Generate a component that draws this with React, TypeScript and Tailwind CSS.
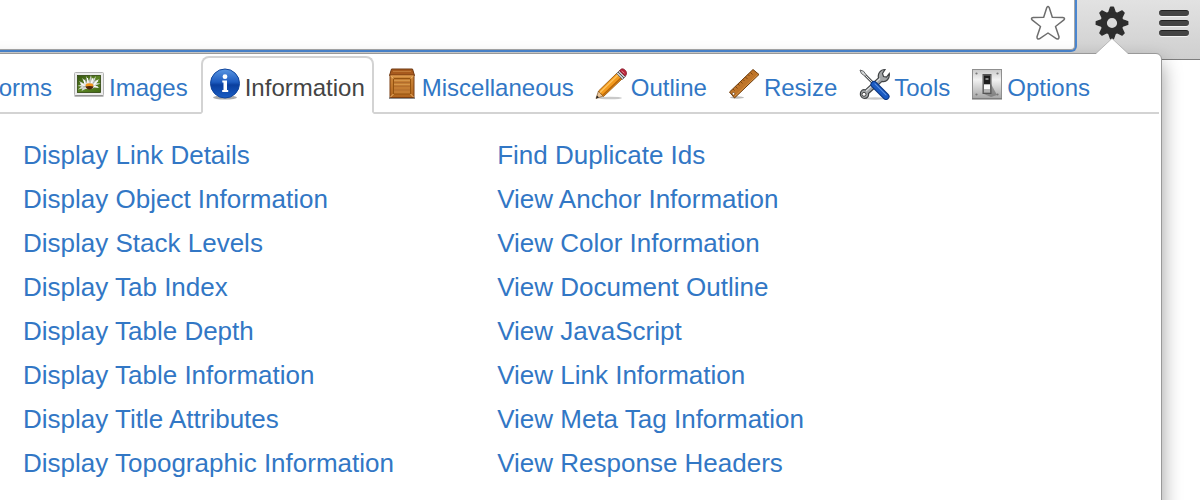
import React from 'react';

const FormsIcon = () => (
  <svg viewBox="0 0 32 32" className="w-8 h-8">
    <rect x="2" y="5" width="28" height="22" fill="#fff" stroke="#999" />
    <path d="M6 11h20M6 16h20M6 21h12" stroke="#3875c6" strokeWidth="2" />
  </svg>
);

const ImagesIcon = () => (
  <svg viewBox="0 0 32 32" className="w-8 h-8">
    <defs>
      <linearGradient id="grass" x1="0" y1="0" x2="1" y2="1">
        <stop offset="0" stopColor="#34530f" />
        <stop offset="0.5" stopColor="#5c8524" />
        <stop offset="1" stopColor="#416a14" />
      </linearGradient>
    </defs>
    <rect x="1.5" y="4.5" width="29" height="23" rx="1" fill="#ececec" stroke="#b4b4b4" />
    <path d="M1.5 28h29" stroke="#777" />
    <rect x="4.500" y="7.500" width="23" height="17" fill="url(#grass)" stroke="#2c420d" strokeWidth="0.800" />
    <path
      d="M6 13l6 3-3-6 5 4-1-6 3 5 2-6 1 6 4-5-1.500 5 5-2-4 4 5 .5-5 2 4 2.500-5-.5-3 1.500h-6l-4 2 1-2.500-4.500 1 3.500-3-4-.5 4-1.500z"
      fill="#d8dad6"
    />
    <path d="M12 16l-1-4M15 15l-.5-5M18.500 15l1.500-5M21 16.500l4-4M11.500 17.500l-4-2M21 18.500l4 .5" stroke="#fff" strokeWidth="1.100" />
    <path d="M13.500 15l-1.500-4M17 14.500v-4M20 15.500l2.500-4M10 19l3-.5" stroke="#8e958c" strokeWidth="0.700" />
    <ellipse cx="16.500" cy="17.500" rx="3.800" ry="2.200" fill="#f0941c" />
    <path d="M12.500 18.500c1 4 7 4 8 0-2-.8-6-.8-8 0z" fill="#4a260d" />
  </svg>
);

const InfoIcon = () => (
  <svg viewBox="0 0 32 32" className="w-8 h-8">
    <defs>
      <linearGradient id="infoBall" x1="0" y1="0" x2="0" y2="1">
        <stop offset="0" stopColor="#5a96e2" />
        <stop offset="0.450" stopColor="#1e5cc0" />
        <stop offset="0.550" stopColor="#0a3f9e" />
        <stop offset="1" stopColor="#1a5dc4" />
      </linearGradient>
    </defs>
    <ellipse cx="16" cy="29.500" rx="12" ry="2" fill="#555" opacity="0.500" />
    <circle cx="16" cy="15.500" r="14.500" fill="url(#infoBall)" stroke="#10459c" />
    <circle cx="16" cy="8.700" r="2.400" fill="#fff" />
    <path d="M13.300 12.500h4.700v9.500h1.200v2h-6v-2h1.300v-7.500h-1.200z" fill="#fff" />
  </svg>
);

const CrateIcon = () => (
  <svg viewBox="0 0 32 32" className="w-8 h-8">
    <defs>
      <linearGradient id="crate" x1="0" y1="0" x2="0" y2="1">
        <stop offset="0" stopColor="#d08a3c" />
        <stop offset="1" stopColor="#b0641c" />
      </linearGradient>
    </defs>
    <path d="M3 30h26" stroke="#444" strokeWidth="2" opacity="0.600" />
    <path d="M5.500 1h21l2 6.500h-25z" fill="#a85a1d" stroke="#6e3812" />
    <path d="M7 3.500h18" stroke="#c07a38" />
    <rect x="4" y="7" width="24" height="22.500" rx="0.500" fill="url(#crate)" stroke="#7a3e12" />
    <rect x="7.500" y="10.500" width="17" height="15.500" fill="#c47d33" stroke="#94530f" />
    <path d="M8 14.500h16M8 18.300h16M8 22h16" stroke="#a9662a" strokeWidth="0.700" />
    <path d="M8 12.500h16M8 16.500h16" stroke="#dda053" strokeWidth="0.700" />
    <path d="M4.500 8l3 2.500M27.500 8l-3 2.500M4.500 29l3-3M27.500 29l-3-3" stroke="#f0b870" />
    <path d="M5 8h22" stroke="#eaa95b" />
  </svg>
);

const PencilIcon = () => (
  <svg viewBox="0 0 32 32" className="w-8 h-8">
    <ellipse cx="15" cy="30" rx="12" ry="1.300" fill="#777" opacity="0.400" />
    <path d="M1 30.500L3.500 23l5 5z" fill="#ecc79a" stroke="#7d5326" strokeWidth="0.700" />
    <path d="M1 30.500l1-3 2 2z" fill="#222" />
    <path d="M3.500 23L22 5l5.500 5.500-19 18z" fill="#f39a1d" stroke="#8f5109" strokeWidth="0.800" />
    <path d="M5 24.500L23.500 6.500" stroke="#ffc561" strokeWidth="1.300" />
    <path d="M7.800 27.300L26.500 9.500" stroke="#b86508" strokeWidth="1.500" />
    <path d="M21.500 5.500L24.500 2.500l6 6-3 3z" fill="#c8cbd0" stroke="#555" strokeWidth="0.700" />
    <path d="M23 4l6 6" stroke="#555" />
    <path d="M24.500 2.800c2-2.800 4-2.300 5.700-.6 1.800 1.800 2 4 0 6z" fill="#b8263c" stroke="#77101f" strokeWidth="0.700" />
    <path d="M26.500 2.800l3 2.500" stroke="#e37c88" />
  </svg>
);

const RulerIcon = () => (
  <svg viewBox="0 0 32 32" className="w-8 h-8">
    <ellipse cx="9" cy="29.500" rx="7" ry="1.200" fill="#555" opacity="0.400" />
    <path d="M1.500 24L25 1.500l6 5L6.500 30z" fill="#bf7529" stroke="#6f3d0c" />
    <path d="M6.500 28.500L29.500 6.800" stroke="#d79243" />
    <path
      d="M5 21l1.500 1.500M7.500 18.500l2 2M10 16l1.500 1.500M12.500 13.500l2 2M15 11.500l1.500 1.500M17.500 9l2 2M20 6.500l1.500 1.500M22.500 4.500l2 2"
      stroke="#6b390b"
      strokeWidth="0.800"
    />
    <circle cx="5.500" cy="25.800" r="1.300" fill="#fff" stroke="#5d330b" strokeWidth="0.600" />
  </svg>
);

const ToolsIcon = () => (
  <svg viewBox="0 0 32 32" className="w-8 h-8">
    <ellipse cx="17" cy="30.500" rx="13" ry="1.200" fill="#777" opacity="0.400" />
    <path
      d="M3 23.500c1-1.500 3-2 4.500-1.500L20.500 10c-1-4 1.500-8.500 6.500-8.500l-2.500 4 1 3 3 .5 2.800-3.500c.7 5-3 9-7.300 7.800L10.500 25.500c.5 3-1.500 5-4 5-3.500 0-5-4-3.500-7z"
      fill="#a3a6a8"
      stroke="#3f4244"
      strokeWidth="1.200"
    />
    <path d="M8 23L22 10.500" stroke="#dcdedf" strokeWidth="1.300" />
    <circle cx="6" cy="26.300" r="2" fill="#fff" stroke="#444" />
    <path d="M2 2l3.500 1.200 3 4-1.200 1.200-4-3z" fill="#d6d8d9" stroke="#55585a" strokeWidth="0.900" />
    <path d="M7.500 7.500l8 8" stroke="#55585a" strokeWidth="2.800" />
    <path d="M7.500 7.500l8 8" stroke="#e1e2e3" />
    <path d="M16 16.500l12 12" stroke="#0a347f" strokeWidth="7" strokeLinecap="round" />
    <path d="M16 16.500l12 12" stroke="#1a5ac2" strokeWidth="5" strokeLinecap="round" />
    <path d="M17 15.800l11 11" stroke="#5a90e2" strokeWidth="1.100" strokeLinecap="round" />
  </svg>
);

const SwitchIcon = () => (
  <svg viewBox="0 0 32 32" className="w-8 h-8">
    <defs>
      <linearGradient id="plate" x1="0" y1="0" x2="0" y2="1">
        <stop offset="0" stopColor="#c9c9c9" />
        <stop offset="0.350" stopColor="#f2f2f2" />
        <stop offset="1" stopColor="#a5a5a5" />
      </linearGradient>
    </defs>
    <rect x="1.500" y="1.500" width="29" height="29" fill="url(#plate)" stroke="#8f8f8f" />
    <path d="M1 31h30" stroke="#6d6d6d" />
    <path d="M20 16l6 11-6 2-7-3z" fill="#666" opacity="0.600" />
    <rect x="12" y="6.500" width="8" height="19" fill="#777" stroke="#555" />
    <path d="M13 7.500h6v8.500h-6z" fill="#1c1c1c" />
    <path d="M14.500 10h3v2h-3z" fill="#888" />
    <path d="M13 16.500h6v5h-6z" fill="#fafafa" />
    <path d="M13 21.500h6v3h-6z" fill="#b5b5b5" />
    <g fill="#777">
      <circle cx="5.500" cy="5.500" r="1.100" />
      <circle cx="26.500" cy="5.500" r="1.100" />
      <circle cx="5.500" cy="26.500" r="1.100" />
      <circle cx="26.500" cy="26.500" r="1.100" />
    </g>
  </svg>
);

const StarIcon = () => (
  <svg viewBox="0 0 36 36" className="w-9 h-9">
    <path
      d="M16.800 2.600Q18 .6 19.200 2.600L22.300 12.300L32.800 12.600Q35.800 13 33.600 15.200L25.500 21.500L29 31.700Q29.200 34.500 26.600 33.800L18 28L9.400 33.800Q6.800 34.500 7 31.700L10.500 21.500L2.400 15.200Q.2 13 3.200 12.600L13.700 12.300Z"
      fill="#fff"
      stroke="#6e6e6e"
      strokeWidth="1.500"
      strokeLinejoin="round"
    />
  </svg>
);

const GearIcon = () => (
  <svg viewBox="-17 -17 34 34" className="w-[34px] h-[34px]">
    <circle r="8.300" fill="none" stroke="#2d2d2d" strokeWidth="6.400" />
    {[0, 45, 90, 135, 180, 225, 270, 315].map((angle) => (
      <path
        key={angle}
        d="M-3.400 -10L-1.400 -15.700H1.400L3.400 -10Z"
        transform={`rotate(${angle})`}
        fill="#2d2d2d"
        stroke="#2d2d2d"
        strokeWidth="1.400"
        strokeLinejoin="round"
      />
    ))}
  </svg>
);

const tabs = [
  { name: 'Forms', icon: <FormsIcon /> },
  { name: 'Images', icon: <ImagesIcon /> },
  { name: 'Information', icon: <InfoIcon />, active: true },
  { name: 'Miscellaneous', icon: <CrateIcon /> },
  { name: 'Outline', icon: <PencilIcon /> },
  { name: 'Resize', icon: <RulerIcon /> },
  { name: 'Tools', icon: <ToolsIcon /> },
  { name: 'Options', icon: <SwitchIcon /> },
];

const columns = [
  [
    'Display Link Details',
    'Display Object Information',
    'Display Stack Levels',
    'Display Tab Index',
    'Display Table Depth',
    'Display Table Information',
    'Display Title Attributes',
    'Display Topographic Information',
  ],
  [
    'Find Duplicate Ids',
    'View Anchor Information',
    'View Color Information',
    'View Document Outline',
    'View JavaScript',
    'View Link Information',
    'View Meta Tag Information',
    'View Response Headers',
  ],
];

const Toolbar: React.FC = () => (
  <header className="flex items-start h-[60px] shrink-0 pr-[11px] bg-linear-to-b from-[#e2e2e2] to-[#cfcfcf] border-b border-[#7d7d7d]">
    <div className="flex-1 border-r-2 border-b-2 border-[#4a86d0] rounded-br-md bg-[#4a86d0]">
      <div className="flex items-center h-[50px] pr-2 pb-1 bg-white border-r border-b border-[#a8a8a8] rounded-br">
        <input type="text" aria-label="Address" className="flex-1 h-full bg-transparent outline-none" />
        <button aria-label="Bookmark this page">
          <StarIcon />
        </button>
      </div>
    </div>
    <button aria-label="Web Developer" className="flex items-center h-[46px] ml-[18px]">
      <GearIcon />
    </button>
    <button aria-label="Menu" className="flex flex-col justify-center gap-1 h-[46px] ml-[30px]">
      <span className="w-[30px] h-1.5 rounded-full bg-[#444] border-t border-[#222] shadow-[0_1px_0_#f2f2f2]" />
      <span className="w-[30px] h-1.5 rounded-full bg-[#444] border-t border-[#222] shadow-[0_1px_0_#f2f2f2]" />
      <span className="w-[30px] h-1.5 rounded-full bg-[#444] border-t border-[#222] shadow-[0_1px_0_#f2f2f2]" />
    </button>
  </header>
);

export default function App() {
  return (
    <div className="flex flex-col h-screen overflow-hidden bg-white font-['Liberation_Sans',Arial,sans-serif] text-[#3277c5]">
      <Toolbar />

      {/* Extension popup, runs past the left and bottom of the window */}
      <main className="relative flex-1 -mt-[7px] -mb-10 -ml-[61px] mr-[38px] bg-white border border-[#999] rounded-md shadow-[0_10px_20px_rgba(0,0,0,0.4)]">
        <svg viewBox="0 0 32 17" className="absolute -top-4 right-[33px] w-8 h-[17px]">
          <path d="M0 15.500L16 .5L32 15.500V17H0Z" fill="#fff" />
          <path d="M0 15.500L16 .5L32 15.500" fill="none" stroke="#999" strokeWidth="0.600" />
        </svg>

        <nav className="mr-0.5 pt-0.5">
          <ul className="flex gap-1 border-b-2 border-[#d3d3d3]">
            {tabs.map((tab) => (
              <li key={tab.name} className="shrink-0 -mb-0.5">
                <a
                  href="#"
                  className={`flex items-end gap-1 pl-1.5 pr-[7px] pt-2.5 pb-3 border-2 text-2xl leading-6 ${
                    tab.active
                      ? 'rounded-t-lg border-[#d3d3d3] border-b-white bg-white text-[#444]'
                      : 'border-transparent'
                  }`}
                >
                  {tab.icon}
                  <span className="leading-6">{tab.name}</span>
                </a>
              </li>
            ))}
          </ul>
        </nav>

        <section className="grid grid-cols-12 pt-[19px] pl-[83px]">
          {columns.map((items) => (
            <ul key={items[0]} className="col-span-5">
              {items.map((item) => (
                <li key={item} className="text-[26px] leading-[44px]">
                  <a href="#">{item}</a>
                </li>
              ))}
            </ul>
          ))}
        </section>
      </main>
    </div>
  );
}
